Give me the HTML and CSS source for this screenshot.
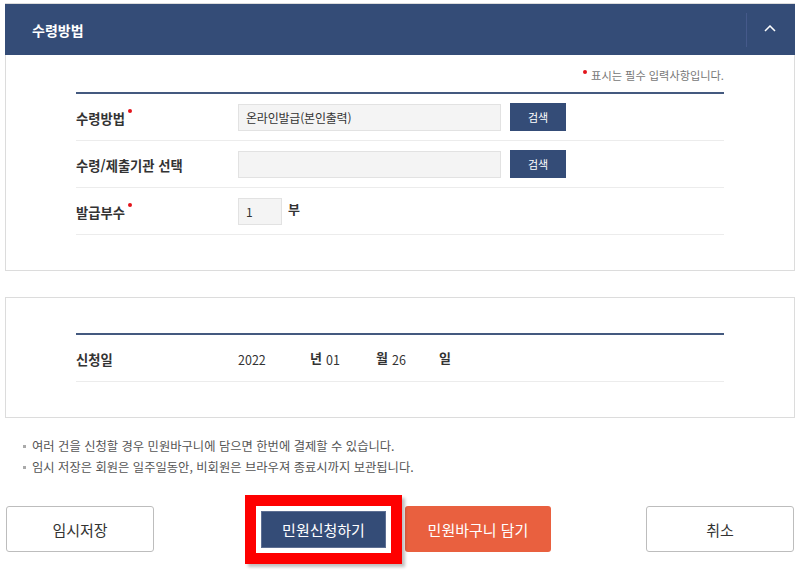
FILE: index.html
```html
<!DOCTYPE html>
<html lang="ko">
<head>
<meta charset="utf-8">
<title>수령방법</title>
<link rel="stylesheet" href="styles.css">
</head>
<body>
<div class="page">
  <section class="panel">
    <div class="panel-head">
      <h2 class="panel-title">수령방법</h2>
      <div class="toggle">
        <svg width="12" height="7" viewBox="0 0 12 7"><polyline points="1,6 6,1 11,6" fill="none" stroke="#fff" stroke-width="1.5"/></svg>
      </div>
    </div>
    <div class="panel-body">
      <p class="req-note"><span class="dot"></span>표시는 필수 입력사항입니다.</p>
      <div class="form">
        <div class="row">
          <div class="label">수령방법<span class="dot"></span></div>
          <div class="field">
            <div class="input wide">온라인발급(본인출력)</div>
            <button class="btn-search">검색</button>
          </div>
        </div>
        <div class="row">
          <div class="label">수령/제출기관 선택</div>
          <div class="field">
            <div class="input wide"></div>
            <button class="btn-search">검색</button>
          </div>
        </div>
        <div class="row">
          <div class="label">발급부수<span class="dot"></span></div>
          <div class="field">
            <div class="input small">1</div>
            <span class="unit">부</span>
          </div>
        </div>
      </div>
    </div>
  </section>

  <section class="panel panel-date">
    <div class="panel-body date-body">
      <div class="form">
        <div class="row">
          <div class="label">신청일</div>
          <div class="field date">
            <span class="num year">2022</span><span class="unit-d">년</span><span class="num month">01</span><span class="unit-d">월</span><span class="num day">26</span><span class="unit-d">일</span>
          </div>
        </div>
      </div>
    </div>
  </section>

  <ul class="notes">
    <li>여러 건을 신청할 경우 민원바구니에 담으면 한번에 결제할 수 있습니다.</li>
    <li>임시 저장은 회원은 일주일동안, 비회원은 브라우져 종료시까지 보관됩니다.</li>
  </ul>

  <div class="actions">
    <button class="btn btn-line">임시저장</button>
    <div class="center-group">
      <div class="apply-slot">
        <div class="highlight">
          <button class="btn-apply">민원신청하기</button>
        </div>
      </div>
      <button class="btn btn-orange">민원바구니 담기</button>
    </div>
    <button class="btn btn-line">취소</button>
  </div>
</div>
</body>
</html>
```

FILE: styles.css
```css
* { box-sizing: border-box; }
html, body { margin: 0; padding: 0; background: #fff; }
body {
  font-family: "Noto Sans CJK KR", "Noto Sans", sans-serif;
  color: #333;
  width: 800px;
  height: 571px;
  overflow: hidden;
}
.page { padding: 3px 5px 0; }

.panel {
  border: 1px solid #dcdcdc;
  width: 790px;
}
.panel-head {
  background: #344c77;
  height: 51px;
  margin: 0 -1px;
  display: flex;
  align-items: center;
  justify-content: space-between;
}
.panel-title {
  margin: 0 0 0 27px;
  font-size: 14px;
  font-weight: 700;
  color: #fff;
  line-height: 20px;
}
.toggle {
  width: 49px;
  height: 34px;
  border-left: 1px solid #45598a;
  display: flex;
  align-items: center;
  justify-content: center;
  padding-right: 2px;
}
.toggle svg { display: block; margin-top: -2px; }

.panel-body { padding: 0 70px 35px; }
.req-note {
  margin: 0;
  padding-top: 12px;
  height: 37px;
  text-align: right;
  font-size: 11.2px;
  line-height: 16px;
  color: #777;
}
.req-note .dot { margin: 0 4px 0 0; top: -5px; }

.dot {
  display: inline-block;
  width: 4px;
  height: 4px;
  border-radius: 50%;
  background: #e3141b;
  position: relative;
  top: -9px;
  margin-left: 3px;
  vertical-align: middle;
}

.form { border-top: 2px solid #44597f; }
.row {
  display: flex;
  align-items: center;
  height: 47px;
  border-bottom: 1px solid #ececec;
}
.label {
  width: 162px;
  flex: none;
  font-size: 13.3px;
  font-weight: 700;
  line-height: 18px;
  padding-top: 4px;
  color: #333;
}
.field { display: flex; align-items: center; }
.input {
  height: 27px;
  background: #f4f4f4;
  border: 1px solid #e2e2e2;
  font-size: 12px;
  letter-spacing: -0.2px;
  line-height: 25px;
  padding-left: 7px;
  color: #333;
}
.input.wide { width: 263px; }
.input.small { width: 44px; font-size: 12px; letter-spacing: 0; }
.btn-search {
  margin-left: 9px;
  width: 56px;
  height: 28px;
  border: 0;
  background: #344c77;
  color: #fff;
  font-family: inherit;
  font-size: 11px;
  padding: 0;
}
.unit {
  margin-left: 6px;
  font-size: 13px;
  font-weight: 700;
  position: relative;
  top: -3px;
}

.panel-date { margin-top: 26px; }
.date-body { padding-top: 35px; }
.date { font-size: 12px; }
.num { display: inline-block; font-size: 12.5px; line-height: 18px; padding-top: 3px; }
.year { width: 72px; }
.month { width: 50px; }
.day { width: 47px; }
.unit-d { display: inline-block; width: 16px; font-size: 13px; font-weight: 700; line-height: 18px; }

.notes {
  list-style: none;
  margin: 18px 0 0;
  padding: 0 0 0 27px;
  font-size: 12.3px;
  line-height: 21px;
  color: #555;
}
.notes li { position: relative; }
.notes li::before {
  content: "";
  position: absolute;
  left: -9px;
  top: 9px;
  width: 3px;
  height: 3px;
  background: #aaa;
}

.actions {
  margin: 28px 1px 0;
  display: flex;
  justify-content: space-between;
  align-items: flex-start;
}
.btn {
  height: 46px;
  border-radius: 3px;
  font-family: inherit;
  font-size: 15px;
  padding: 0;
  cursor: pointer;
}
.btn-line {
  width: 148px;
  background: #fff;
  border: 1px solid #bdbdbd;
  color: #333;
}
.center-group { display: flex; gap: 10px; }
.apply-slot {
  width: 146px;
  height: 46px;
  position: relative;
  background: #344c77;
  border-radius: 3px;
}
.highlight {
  position: absolute;
  left: -4px;
  top: -11px;
  width: 157px;
  height: 69px;
  border: 11px solid #fe0000;
  padding: 5px;
  background: #fff;
  box-shadow: 3px 3px 3px rgba(0,0,0,0.25);
  z-index: 2;
}
.btn-apply {
  display: block;
  width: 100%;
  height: 100%;
  background: #344c77;
  border: 1px solid #5d6f93;
  color: #fff;
  font-family: inherit;
  font-size: 15px;
  padding: 0;
}
.btn-orange {
  width: 146px;
  background: #e9603f;
  border: 0;
  color: #fff;
}
```
